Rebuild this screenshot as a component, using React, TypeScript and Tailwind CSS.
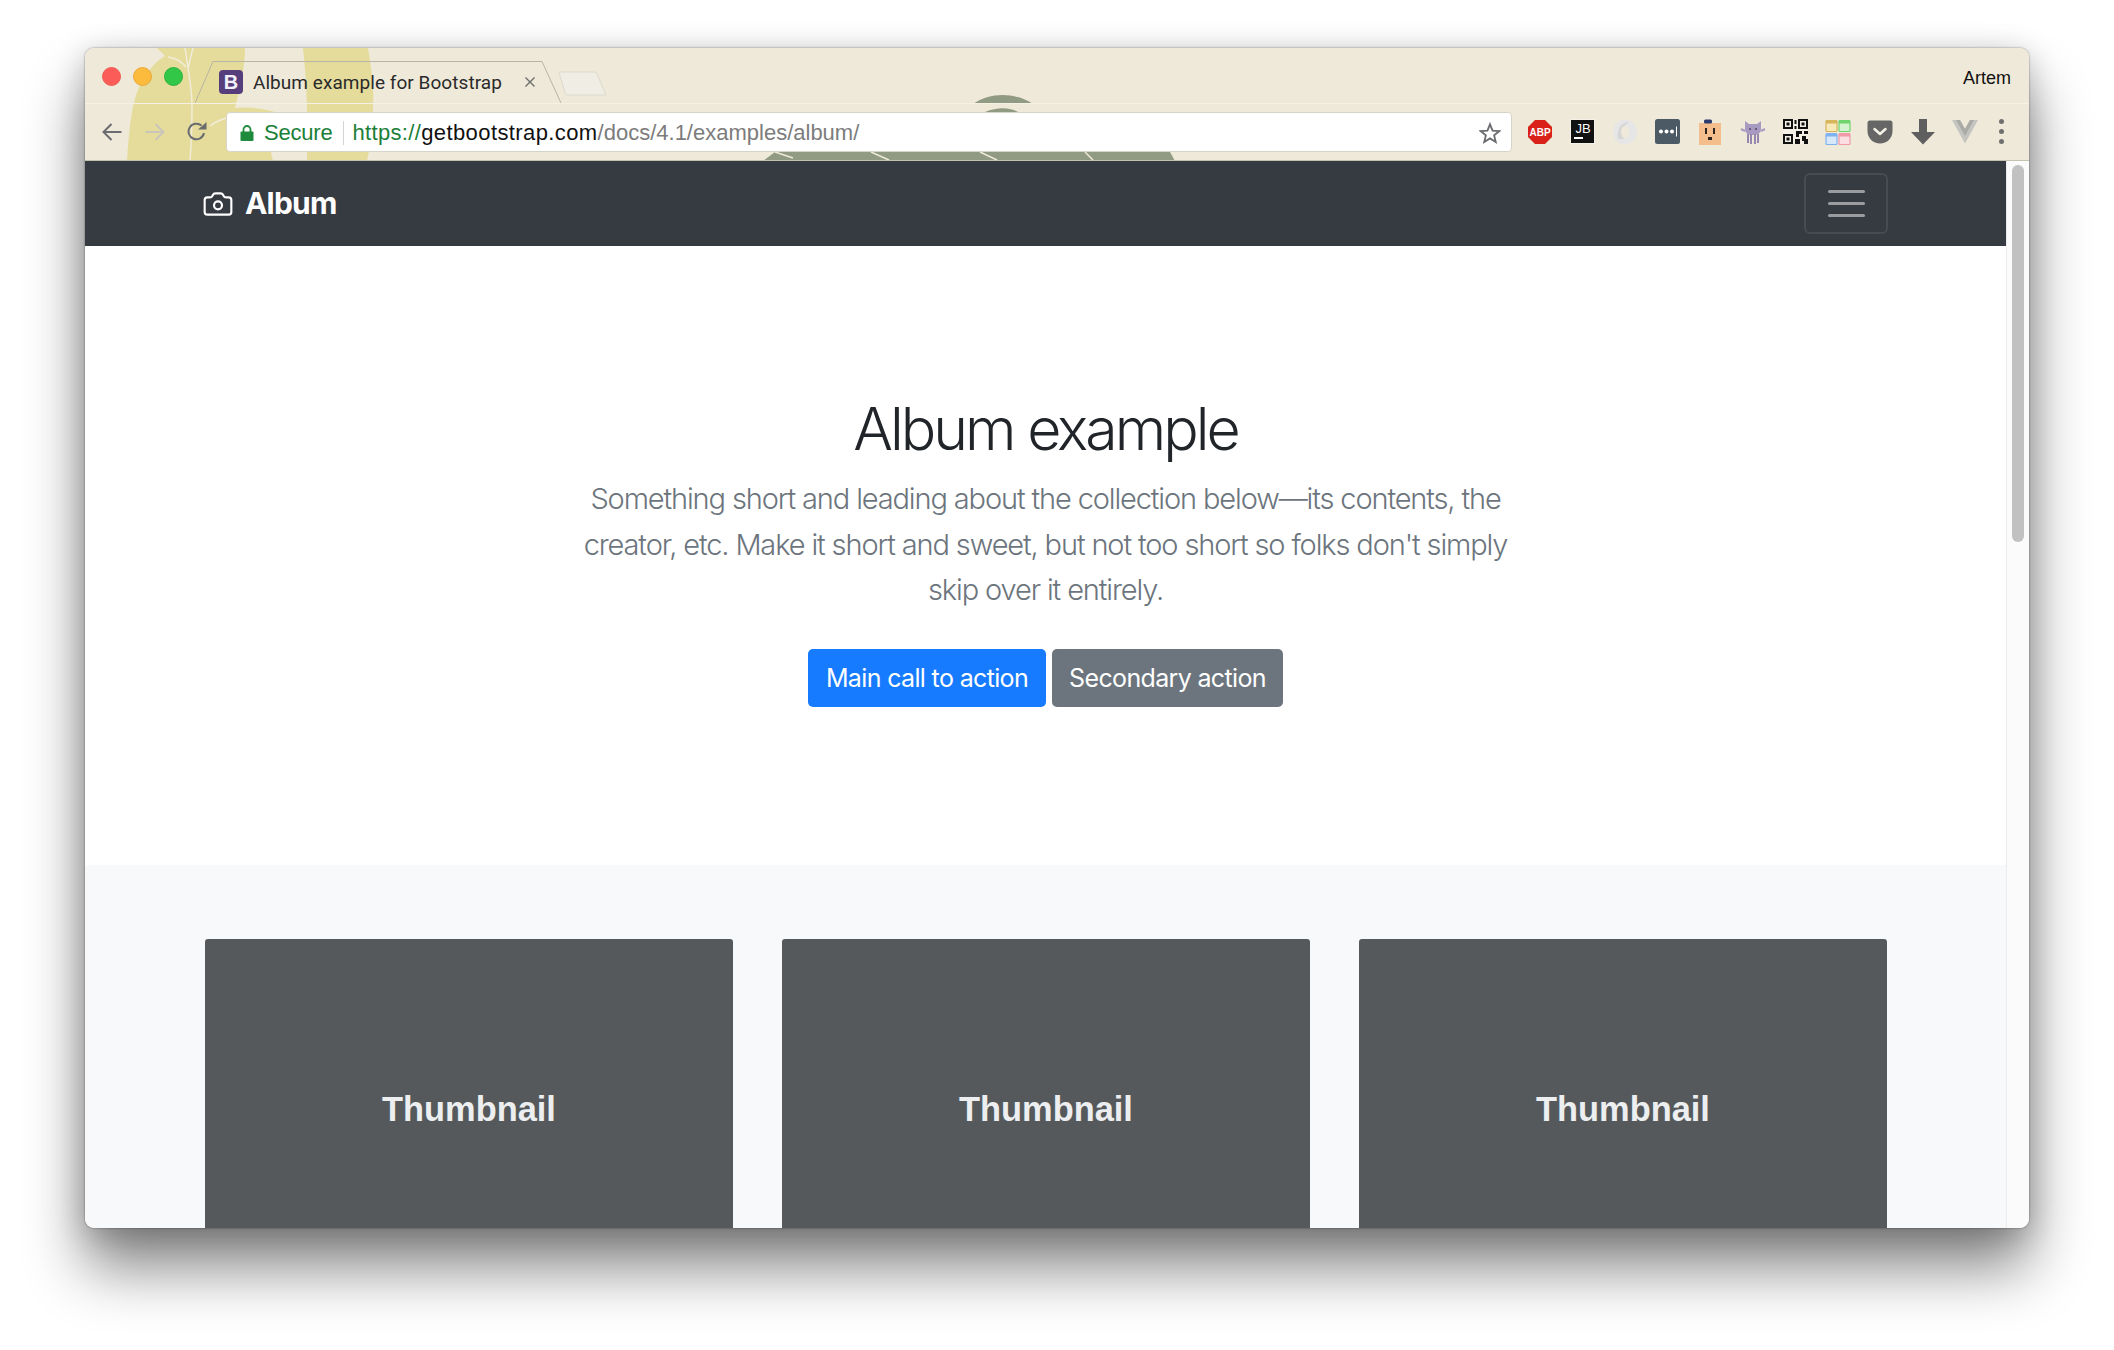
import { Camera } from "lucide-react";

const sans = "font-['Inter',sans-serif]";

// leaves of the wallpaper showing through the browser frame
function ChromeArt() {
  return (
    <svg className="absolute left-0 top-0" width="1944" height="113" viewBox="0 0 1944 113">
      <path d="M72 0 L80 8 C66 16 58 31 52 44 C47 58 44 80 42 113 L188 113 C184 96 180 80 190 64 Q170 58 150 60 C155 41 160 18 160 0 Z" fill="#e5dc9b" />
      <path d="M218 0 C220 20 222 40 222 70 C222 90 222 100 222 113 L282 113 C287 90 289 60 288 40 C287 25 285 12 283 0 Z" fill="#e5dc9b" />
      <path d="M100 0 C103 20 107 40 107 58 C107 80 106 100 105 113 M108 0 C106 8 104 15 103 22 M83 9 C90 10 96 13 101 19 M125 78 C130 74 135 72 141 70" fill="none" stroke="#f1ecd9" strokeWidth="1.5" />
      <path d="M888 56 C905 44 930 44 948 56 Z" fill="#919a82" />
      <path d="M900 64 C912 59 924 59 933 64 Z" fill="#919a82" />
      <path d="M678 113 L690 104 L1085 104 L1085 104 L1090 113 Z" fill="#919a82" />
      <path d="M690 104 L708 110 M786 104 L804 112 M895 104 L912 112 M1000 104 L1008 112" fill="none" stroke="#efe9d9" strokeWidth="1.5" />
    </svg>
  );
}

function Tab() {
  return (
    <div className={`relative flex h-[42px] w-[368px] items-center`}>
      <svg className="absolute left-0 top-0" width="368" height="42" viewBox="0 0 368 42">
        <path d="M0 42 L18 0.5 L347 0.5 L366 42" fill="none" stroke="#b8b4a4" strokeWidth="1" />
      </svg>
      <div className="relative ml-[24px] flex h-[24px] w-[24px] items-center justify-center rounded-[4px] bg-[#563d7c] font-['Liberation_Sans',sans-serif] text-[20px] font-bold leading-none text-[#f3eff8]">
        B
      </div>
      <span className="relative ml-[10px] whitespace-nowrap font-['Roboto',sans-serif] text-[19px] leading-none tracking-[0.05px] text-[#2a2a2a]">
        Album example for Bootstrap
      </span>
      <svg className="absolute left-[330px] top-[16px]" width="10" height="10" viewBox="0 0 10 10">
        <path d="M0.5 0.5 L9.5 9.5 M9.5 0.5 L0.5 9.5" stroke="#6d6d6d" strokeWidth="1.4" />
      </svg>
    </div>
  );
}

function TabStrip() {
  return (
    <div className="relative flex h-[56px] items-end border-b border-[#f5f1e4]">
      <div className="flex gap-[12px] self-start pl-[17px] pt-[19px]">
        <div className="h-[19px] w-[19px] rounded-full border border-[#ee5a52] bg-[#fc5c57]" />
        <div className="h-[19px] w-[19px] rounded-full border border-[#e9a93a] bg-[#fdbb3e]" />
        <div className="h-[19px] w-[19px] rounded-full border border-[#2bb23e] bg-[#33c748]" />
      </div>
      <div className="ml-[12px]">
        <Tab />
      </div>
      <svg className="mb-[6px] ml-[-5px]" width="50" height="26" viewBox="0 0 50 26">
        <path d="M1 1 L36 1 Q38 1 39 3 L48 24 L10 24 Q8 24 7 22 Z" fill="#f0ede4" stroke="#dcd9cd" strokeWidth="1" />
      </svg>
      <span className="absolute right-[18px] top-[20px] font-['Liberation_Sans',sans-serif] text-[18px] leading-[20px] text-[#111]">
        Artem
      </span>
    </div>
  );
}

function Ext({ children }: { children: React.ReactNode }) {
  return <div className="flex h-[28px] w-[42.5px] items-center justify-center">{children}</div>;
}

function Extensions() {
  return (
    <div className="flex items-center">
      <Ext>
        <svg width="26" height="26" viewBox="0 0 26 26">
          <path d="M8 1 L18 1 L25 8 L25 18 L18 25 L8 25 L1 18 L1 8 Z" fill="#d9211a" />
          <text x="13" y="17" textAnchor="middle" fill="#fff" fontFamily="Liberation Sans" fontWeight="700" fontSize="10">ABP</text>
        </svg>
      </Ext>
      <Ext>
        <svg width="25" height="25" viewBox="0 0 25 25">
          <rect x="0.5" y="0.5" width="24" height="24" fill="#111" stroke="#f4f1e8" />
          <text x="13" y="13.5" textAnchor="middle" fill="#fff" fontFamily="Liberation Sans" fontWeight="400" fontSize="13">JB</text>
          <rect x="4" y="18" width="9" height="2" fill="#fff" />
        </svg>
      </Ext>
      <Ext>
        <svg width="26" height="26" viewBox="0 0 26 26">
          <ellipse cx="13" cy="13" rx="12" ry="12.5" fill="#e6e6e6" />
          <path d="M6 20 C4 10 10 3 17 3 C10 7 9 14 12 20 Z" fill="#d6d6d6" />
          <ellipse cx="13" cy="13" rx="4" ry="6" fill="#efe9d9" />
        </svg>
      </Ext>
      <Ext>
        <svg width="25" height="25" viewBox="0 0 25 25">
          <rect width="25" height="25" rx="2.5" fill="#4b5a64" />
          <circle cx="6" cy="12.5" r="2" fill="#fff" />
          <circle cx="11.5" cy="12.5" r="2" fill="#fff" />
          <circle cx="17" cy="12.5" r="2" fill="#fff" />
          <rect x="21" y="7.5" width="1" height="10" fill="#fff" />
        </svg>
      </Ext>
      <Ext>
        <svg width="24" height="26" viewBox="0 0 24 26">
          <rect x="1" y="4" width="22" height="22" fill="#f4bd8c" />
          <rect x="6" y="0.5" width="8" height="4" rx="1.5" fill="#2a3a6c" />
          <rect x="7" y="9" width="2" height="6" fill="#2b2420" />
          <rect x="15" y="9" width="2" height="6" fill="#2b2420" />
          <rect x="10" y="18" width="4" height="3" fill="#2b2420" />
        </svg>
      </Ext>
      <Ext>
        <svg width="26" height="26" viewBox="0 0 26 26">
          <path d="M5 2 L9 5 L17 5 L21 2 L21 10 C21 14 18 16 13 16 C8 16 5 14 5 10 Z" fill="#a79ac0" />
          <path d="M1 10 L5 12 M25 10 L21 12" stroke="#a79ac0" strokeWidth="2" />
          <path d="M8 15 L8 24 M11 15 L11 25 M15 15 L15 25 M18 15 L18 24" stroke="#9587b0" strokeWidth="2" />
          <circle cx="10" cy="10" r="1" fill="#554870" />
          <circle cx="16" cy="10" r="1" fill="#554870" />
        </svg>
      </Ext>
      <Ext>
        <svg width="25" height="25" viewBox="0 0 25 25">
          <rect width="25" height="25" fill="#fff" opacity="0.35" />
          <path d="M0 0 H10 V10 H0 Z M2 2 V8 H8 V2 Z M15 0 H25 V10 H15 Z M17 2 V8 H23 V2 Z M0 15 H10 V25 H0 Z M2 17 V23 H8 V17 Z" fill="#111" fillRule="evenodd" />
          <rect x="3.5" y="3.5" width="3" height="3" fill="#111" />
          <rect x="18.5" y="3.5" width="3" height="3" fill="#111" />
          <rect x="3.5" y="18.5" width="3" height="3" fill="#111" />
          <path d="M11.5 1 H13.5 V5 H11.5 Z M11.5 7 H13.5 V10 H11.5 Z M13 12 H19 V15 H16 V18 H13 Z M21 12 H25 V15 H21 Z M19 17 H23 V20 H25 V25 H21 V22 H19 Z M12 20 H17 V25 H12 Z" fill="#111" />
        </svg>
      </Ext>
      <Ext>
        <svg width="26" height="26" viewBox="0 0 26 26">
          <rect x="1" y="1.5" width="11" height="11" rx="1" fill="#f8e9b8" stroke="#d8b45a" strokeWidth="1.2" />
          <rect x="14" y="1.5" width="11" height="11" rx="1" fill="#d5f3cf" stroke="#6fd46d" strokeWidth="1.2" />
          <rect x="1" y="14.5" width="11" height="11" rx="1" fill="#d8e8fb" stroke="#7fb2ee" strokeWidth="1.2" />
          <rect x="14" y="14.5" width="11" height="11" rx="1" fill="#fbdfe3" stroke="#ef9aa6" strokeWidth="1.2" />
          <rect x="1" y="1.5" width="11" height="3" fill="#d8b45a" />
          <rect x="14" y="1.5" width="11" height="3" fill="#6fd46d" />
          <rect x="1" y="14.5" width="11" height="3" fill="#7fb2ee" />
          <rect x="14" y="14.5" width="11" height="3" fill="#ef9aa6" />
        </svg>
      </Ext>
      <Ext>
        <svg width="26" height="24" viewBox="0 0 26 24">
          <path d="M3 0.5 H23 Q25.5 0.5 25.5 3 V11 C25.5 18 20 23.5 13 23.5 C6 23.5 0.5 18 0.5 11 V3 Q0.5 0.5 3 0.5 Z" fill="#666" />
          <path d="M7.5 9 L13 14 L18.5 9" fill="none" stroke="#f4f1e8" strokeWidth="2.5" strokeLinecap="round" strokeLinejoin="round" />
        </svg>
      </Ext>
      <Ext>
        <svg width="26" height="26" viewBox="0 0 26 26">
          <path d="M9 0 H17 V13 H25 L13 25.5 L1 13 H9 Z" fill="#5f5f5f" />
        </svg>
      </Ext>
      <Ext>
        <svg width="26" height="24" viewBox="0 0 26 24">
          <path d="M0 0 H8 L13 9 L18 0 H26 L13 23.5 Z" fill="#c4c4c0" />
          <path d="M8 0 L13 9 L18 0 H22 L13 16 L4 0 Z" fill="#aaaaa7" />
        </svg>
      </Ext>
      <div className="ml-[5px] flex h-[25px] w-[20px] flex-col items-center justify-between">
        <div className="h-[5px] w-[5px] rounded-full bg-[#707070]" />
        <div className="h-[5px] w-[5px] rounded-full bg-[#707070]" />
        <div className="h-[5px] w-[5px] rounded-full bg-[#707070]" />
      </div>
    </div>
  );
}

function Toolbar() {
  return (
    <div className="relative flex h-[57px] items-center border-b border-[#c6c2b2] pb-[1px]">
      <svg className="ml-[17px]" width="20" height="20" viewBox="0 0 20 20">
        <path d="M19.5 10 H2 M9.5 2 L1.5 10 L9.5 18" fill="none" stroke="#6a6c70" strokeWidth="2" />
      </svg>
      <svg className="ml-[23px]" width="20" height="20" viewBox="0 0 20 20">
        <path d="M0.5 10 H18 M10.5 2 L18.5 10 L10.5 18" fill="none" stroke="#c9c6b9" strokeWidth="2" />
      </svg>
      <svg className="ml-[22px]" width="20" height="20" viewBox="0 0 20 20">
        <path d="M17 11 A7.8 7.8 0 1 1 14.5 3.6" fill="none" stroke="#6a6c70" strokeWidth="2" />
        <path d="M11 7.5 H19.5 V0 Z" fill="#6a6c70" />
      </svg>
      <div className="ml-[19px] flex h-[40px] w-[1286px] items-center rounded-[4px] border border-[#d6d3c8] bg-white pt-[2px] font-['Liberation_Sans',sans-serif] text-[22px] leading-none">
        <svg className="ml-[13px]" width="14" height="16" viewBox="0 0 14 16">
          <path d="M3.5 7 V4.5 A3.5 3.5 0 0 1 10.5 4.5 V7" fill="none" stroke="#1e8a3c" strokeWidth="1.8" />
          <rect x="0.5" y="6.5" width="13" height="9.5" rx="1" fill="#1e8a3c" />
        </svg>
        <span className="ml-[10px] tracking-[-0.2px] text-[#1b7f37]">Secure</span>
        <div className="ml-[10px] h-[24px] w-[1px] bg-[#d4d4d4]" />
        <span className="ml-[9px] whitespace-nowrap">
          <span className="tracking-[0.33px] text-[#1b7f37]">https://</span>
          <span className="tracking-[0.4px] text-[#111]">getbootstrap.com</span>
          <span className="text-[#7c7c7c]">/docs/4.1/examples/album/</span>
        </span>
        <svg className="ml-auto mr-[10px]" width="22" height="22" viewBox="0 0 24 24">
          <path d="M12 2.5 L14.8 9.4 L22.2 9.9 L16.5 14.6 L18.3 21.8 L12 17.9 L5.7 21.8 L7.5 14.6 L1.8 9.9 L9.2 9.4 Z" fill="none" stroke="#6a6c70" strokeWidth="2" />
        </svg>
      </div>
      <div className="ml-[7px]">
        <Extensions />
      </div>
    </div>
  );
}

function Navbar() {
  return (
    <header className="flex h-[85px] items-center justify-between bg-[#363a41] pl-[117px] pr-[118px] shadow-[0_1px_3px_rgba(0,0,0,0.1)]">
      <div className="flex items-center gap-[11px]">
        <Camera className="h-[32px] w-[32px] text-white" strokeWidth={1.6} />
        <strong className={`${sans} mb-[1px] text-[30px] font-bold leading-none tracking-[-0.8px] text-white`}>Album</strong>
      </div>
      <div className="flex h-[61px] w-[84px] flex-col items-center justify-center gap-[9px] rounded-[6px] border-2 border-[#474b52]">
        <div className="h-[3px] w-[37px] rounded-full bg-[#9a9c9f]" />
        <div className="h-[3px] w-[37px] rounded-full bg-[#9a9c9f]" />
        <div className="h-[3px] w-[37px] rounded-full bg-[#9a9c9f]" />
      </div>
    </header>
  );
}

function Hero() {
  return (
    <section className={`${sans} flex h-[619px] flex-col items-center bg-white pt-[146px]`}>
      <h1 className="text-[59px] font-light leading-[74px] tracking-[-3px] text-[#212529]">Album example</h1>
      <p className="mt-[10px] w-[930px] text-center text-[29px] font-light leading-[45.6px] tracking-[-1.13px] text-[#6c757d]">
        Something short and leading about the collection below—its contents, the creator, etc. Make it short and sweet, but not too short so folks don't simply skip over it entirely.
      </p>
      <div className="mt-[36px] flex gap-[6px]">
        <button className="h-[58px] w-[238px] rounded-[5px] bg-[#167bff] pt-[2px] text-[25px] tracking-[-0.65px] text-white">Main call to action</button>
        <button className="h-[58px] w-[231px] rounded-[5px] bg-[#6c757d] pt-[2px] text-[25px] tracking-[-0.65px] text-white">Secondary action</button>
      </div>
    </section>
  );
}

function Thumbnail() {
  return (
    <div className="flex h-[341px] items-center justify-center rounded-[3px] bg-[#55595c] font-['Liberation_Sans',sans-serif] text-[34.4px] font-bold text-[#eceeef]">
      Thumbnail
    </div>
  );
}

export default function App() {
  return (
    <div className="h-[1350px] w-[2114px] overflow-hidden bg-white pl-[85px] pt-[48px]">
      <div className="flex h-[1180px] w-[1944px] flex-col overflow-hidden rounded-[9px] shadow-[0_0_2px_rgba(0,0,0,0.5),0_40px_60px_rgba(0,0,0,0.48),0_5px_30px_rgba(0,0,0,0.2)]">
        <div className="relative h-[113px] shrink-0 bg-[#efe9d9]">
          <ChromeArt />
          <TabStrip />
          <Toolbar />
        </div>
        <div className="flex min-h-0 flex-1">
          <main className="min-w-0 flex-1 overflow-hidden">
            <Navbar />
            <Hero />
            <section className="h-full bg-[#f8f9fa] pl-[120px] pt-[74px]">
              <div className="grid grid-cols-[528px_528px_528px] gap-[49px]">
                <Thumbnail />
                <Thumbnail />
                <Thumbnail />
              </div>
            </section>
          </main>
          <div className="w-[23px] shrink-0 border-l border-[#ececec] bg-[#fbfbfb] pl-[5px] pt-[4px]">
            <div className="h-[377px] w-[12px] rounded-full bg-[#c1c1c1]" />
          </div>
        </div>
      </div>
    </div>
  );
}
